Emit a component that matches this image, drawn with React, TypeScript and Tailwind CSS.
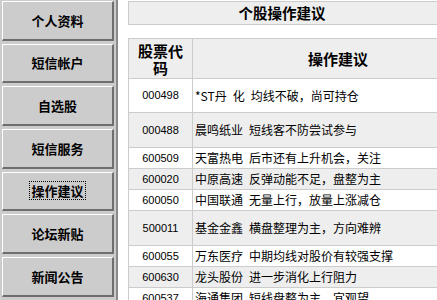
import * as React from "react";

const menu = ["个人资料", "短信帐户", "自选股", "短信服务", "操作建议", "论坛新贴", "新闻公告"];

const rows: { code: string; name: string; advice: string; h: string }[] = [
  { code: "000498", name: "*ST丹\u2002化", advice: "均线不破，尚可持仓", h: "h-[34px]" },
  { code: "000488", name: "晨鸣纸业", advice: "短线客不防尝试参与", h: "h-[35px]" },
  { code: "600509", name: "天富热电", advice: "后市还有上升机会，关注", h: "h-[21px]" },
  { code: "600020", name: "中原高速", advice: "反弹动能不足，盘整为主", h: "h-[21px]" },
  { code: "600050", name: "中国联通", advice: "无量上行，放量上涨减仓", h: "h-[21px]" },
  { code: "500011", name: "基金金鑫", advice: "横盘整理为主，方向难辨", h: "h-[35px]" },
  { code: "600055", name: "万东医疗", advice: "中期均线对股价有较强支撑", h: "h-[21px]" },
  { code: "600630", name: "龙头股份", advice: "进一步消化上行阻力", h: "h-[21px]" },
  { code: "600537", name: "海通集团", advice: "短线盘整为主，宜观望", h: "h-[21px]" },
];

const cjk = "font-['SimSun','Noto_Sans_CJK_SC',sans-serif]";

export default function App() {
  return (
    <div className={`flex h-[300px] w-[437px] overflow-hidden bg-white text-black ${cjk}`}>
      {/* left menu */}
      <div className="flex w-[118px] shrink-0 flex-col gap-[3px] border-r-2 border-[#8a8a8a] bg-[#cccccc] px-[2px] pt-[1px]">
        {menu.map((m) => (
          <button
            key={m}
            className="flex h-[39.67px] shrink-0 items-center justify-center border-t border-l border-b-2 border-r-2 border-t-white border-l-white border-b-[#6e6e6e] border-r-[#6e6e6e] bg-[#cccccc] text-[13px] font-bold leading-none"
          >
            <span className={m === "操作建议" ? "px-[1px] py-[2px] outline-1 outline-dotted outline-black" : ""}>{m}</span>
          </button>
        ))}
      </div>

      {/* content */}
      <div className="min-w-0 flex-1 overflow-hidden pl-[10px] pt-[1px]">
        <div className="flex h-[24px] w-[320px] items-center justify-center border border-[#cccccc] bg-[#eeeeee] pr-[12px] text-[14.5px] font-bold leading-none">
          个股操作建议
        </div>

        <div className="mt-[13px] w-[356px] border-x border-t border-[#cccccc]">
          <div className="flex h-[40px] border-b border-[#cccccc] bg-[#eeeeee] text-[15px] font-bold leading-[17px]">
            <div className="flex w-[64px] shrink-0 items-center justify-center border-r border-[#cccccc] px-[6px] text-center">
              股票代码
            </div>
            <div className="flex flex-1 items-center justify-center">操作建议</div>
          </div>
          {rows.map((r, i) => (
            <div
              key={r.code}
              className={`flex ${r.h} border-b border-[#cccccc] text-[12px] leading-none ${i % 2 === 1 ? "bg-[#eeeeee]" : "bg-white"}`}
            >
              <div className="flex w-[64px] shrink-0 items-center justify-center border-r border-[#cccccc] font-['Liberation_Sans',sans-serif] text-[11px]">
                {r.code}
              </div>
              <div className="flex flex-1 items-center whitespace-pre pl-[2px]">
                <span>{r.name}</span>
                <span className="ml-[6px]">{r.advice}</span>
              </div>
            </div>
          ))}
        </div>
      </div>
    </div>
  );
}
